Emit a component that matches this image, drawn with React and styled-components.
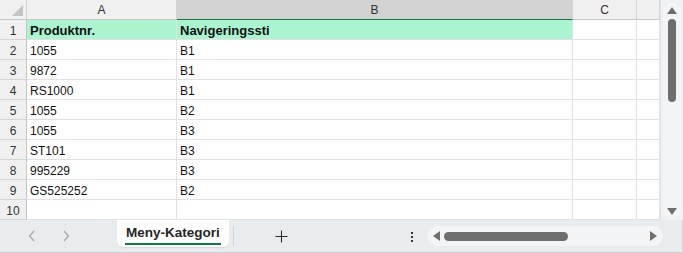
import React from 'react';
import styled, { createGlobalStyle } from 'styled-components';

const GlobalStyle = createGlobalStyle`
    html, body {
        margin: 0;
        padding: 0;
        background: #ffffff;
    }
    body {
        font-family: "Liberation Sans", Arial, sans-serif;
    }
`;

const columns = ['A', 'B', 'C', ''];

const rows = [
    ['Produktnr.', 'Navigeringssti'],
    ['1055', 'B1'],
    ['9872', 'B1'],
    ['RS1000', 'B1'],
    ['1055', 'B2'],
    ['1055', 'B3'],
    ['ST101', 'B3'],
    ['995229', 'B3'],
    ['GS525252', 'B2'],
    ['', ''],
];

const App = () => {
    return (
        <>
            <GlobalStyle />
            <Window>
                <Main>
                    <Sheet>
                        <Corner>
                            <CornerMark />
                        </Corner>
                        {columns.map((c, i) => (
                            <ColHead key={c + i} $selected={c === 'B'}>{c}</ColHead>
                        ))}
                        {rows.map((r, i) => (
                            <React.Fragment key={i}>
                                <RowHead>{i + 1}</RowHead>
                                <Cell $header={i === 0}>{r[0]}</Cell>
                                <Cell $header={i === 0}>{r[1]}</Cell>
                                <Cell />
                                <Cell />
                            </React.Fragment>
                        ))}
                    </Sheet>
                    <VScroll>
                        <VTrack>
                            <ArrowUp />
                            <VThumb />
                            <Spacer />
                            <ArrowDown />
                        </VTrack>
                    </VScroll>
                </Main>
                <TabBar>
                    <NavButtons>
                        <Chevron viewBox="0 0 8 12">
                            <path d="M6 1 L1.5 6 L6 11" />
                        </Chevron>
                        <Chevron viewBox="0 0 8 12">
                            <path d="M2 1 L6.5 6 L2 11" />
                        </Chevron>
                    </NavButtons>
                    <Tab>
                        <TabLabel>Meny-Kategori</TabLabel>
                    </Tab>
                    <Divider />
                    <AddButton>
                        <svg width="13" height="13" viewBox="0 0 13 13">
                            <path d="M6.5 0.5 V12.5 M0.5 6.5 H12.5" stroke="#2b2b2b" strokeWidth="1.1" />
                        </svg>
                    </AddButton>
                    <MoreButton>
                        <Dot />
                        <Dot />
                        <Dot />
                    </MoreButton>
                    <HScroll>
                        <ArrowLeft />
                        <HThumb />
                        <Spacer />
                        <ArrowRight />
                    </HScroll>
                </TabBar>
            </Window>
        </>
    );
};

export default App;

const Window = styled.div`
    width: 683px;
    height: 253px;
    display: flex;
    flex-direction: column;
    overflow: hidden;
    background: #ffffff;
`;

const Main = styled.div`
    display: flex;
    height: 220px;
`;

const Sheet = styled.div`
    flex: 1;
    display: grid;
    grid-template-columns: 27px 150px 396px 64px 23px;
    grid-template-rows: 20px;
    grid-auto-rows: 20px;
    overflow: hidden;
`;

const Corner = styled.div`
    position: relative;
    background: #f0f0f0;
    border-right: 1px solid #d4d4d4;
    border-bottom: 1px solid #c6c6c6;
`;

const CornerMark = styled.div`
    position: absolute;
    right: 3px;
    bottom: 3px;
    width: 0;
    height: 0;
    border-left: 11px solid transparent;
    border-bottom: 11px solid #c4c4c4;
`;

const ColHead = styled.div`
    display: flex;
    align-items: center;
    justify-content: center;
    padding-top: 1px;
    font-size: 12px;
    color: #333333;
    background: ${p => (p.$selected ? '#d2d2d2' : '#f0f0f0')};
    border-right: 1px solid #d4d4d4;
    border-bottom: 1px solid ${p => (p.$selected ? '#1e7145' : '#c6c6c6')};
    box-sizing: border-box;
`;

const RowHead = styled.div`
    display: flex;
    align-items: center;
    justify-content: center;
    padding-top: 2px;
    font-size: 12px;
    color: #333333;
    background: #f0f0f0;
    border-right: 1px solid #c6c6c6;
    border-bottom: 1px solid #d4d4d4;
    box-sizing: border-box;
`;

const Cell = styled.div`
    display: flex;
    align-items: center;
    padding: 2px 0 0 3px;
    font-size: ${p => (p.$header ? '13px' : '12px')};
    font-weight: ${p => (p.$header ? 700 : 400)};
    color: #111111;
    white-space: nowrap;
    background: ${p => (p.$header ? '#aaf4d0' : '#ffffff')};
    border-right: 1px solid #e1e1e1;
    border-bottom: 1px solid #e1e1e1;
    box-sizing: border-box;
`;

const VScroll = styled.div`
    width: 23px;
    background: #eef1f3;
    border-left: 1px solid #e2e5e7;
    box-sizing: border-box;
    padding: 3px 2px 0 2px;
    display: flex;
`;

const VTrack = styled.div`
    flex: 1;
    display: flex;
    flex-direction: column;
    align-items: center;
    background: #f3f4f5;
    border-radius: 9px;
    padding: 4px 0 5px;
`;

const Spacer = styled.div`
    flex: 1;
`;

const ArrowUp = styled.div`
    width: 0;
    height: 0;
    border-left: 5px solid transparent;
    border-right: 5px solid transparent;
    border-bottom: 7px solid #6f6f6f;
`;

const ArrowDown = styled.div`
    width: 0;
    height: 0;
    border-left: 5px solid transparent;
    border-right: 5px solid transparent;
    border-top: 7px solid #6f6f6f;
`;

const VThumb = styled.div`
    margin-top: 5px;
    width: 8px;
    height: 83px;
    border-radius: 4px;
    background: #6e6e6e;
`;

const TabBar = styled.div`
    height: 33px;
    box-sizing: border-box;
    display: flex;
    align-items: center;
    background: #e9ecee;
    border-bottom: 1px solid #c7cbce;
    border-right: 1px solid #d5d9dc;
`;

const NavButtons = styled.div`
    display: flex;
    align-items: center;
    gap: 26px;
    padding-left: 28px;
    width: 117px;
    flex-shrink: 0;
    box-sizing: border-box;
`;

const Chevron = styled.svg`
    width: 8px;
    height: 12px;
    fill: none;
    stroke: #a3a6a8;
    stroke-width: 1.2;
`;

const Tab = styled.div`
    align-self: flex-start;
    width: 112px;
    height: 27px;
    flex-shrink: 0;
    box-sizing: border-box;
    background: #ffffff;
    border-radius: 0 0 6px 6px;
    box-shadow: 0 1px 1px rgba(0, 0, 0, 0.08);
    display: flex;
    justify-content: center;
    padding-top: 5px;
`;

const TabLabel = styled.div`
    font-size: 13.5px;
    font-weight: 700;
    color: #262626;
    height: 18px;
    padding: 0 1px;
    border-bottom: 2px solid #107c41;
    line-height: 16px;
`;

const Divider = styled.div`
    width: 1px;
    height: 20px;
    margin-left: 4px;
    flex-shrink: 0;
    background: #cfd2d4;
`;

const AddButton = styled.div`
    display: flex;
    margin-left: 41px;
`;

const MoreButton = styled.div`
    display: flex;
    flex-direction: column;
    gap: 2px;
    margin-left: 123px;
    padding-top: 2px;
`;

const Dot = styled.div`
    width: 2px;
    height: 2px;
    background: #333333;
`;

const HScroll = styled.div`
    margin-left: 14px;
    width: 236px;
    height: 20px;
    flex-shrink: 0;
    border-radius: 10px;
    background: #f3f4f5;
    display: flex;
    align-items: center;
    padding: 0 6px;
    box-sizing: border-box;
`;

const ArrowLeft = styled.div`
    width: 0;
    height: 0;
    border-top: 5px solid transparent;
    border-bottom: 5px solid transparent;
    border-right: 7px solid #6f6f6f;
`;

const ArrowRight = styled.div`
    width: 0;
    height: 0;
    border-top: 5px solid transparent;
    border-bottom: 5px solid transparent;
    border-left: 7px solid #6f6f6f;
`;

const HThumb = styled.div`
    margin-left: 4px;
    width: 124px;
    height: 9px;
    border-radius: 5px;
    background: #6e6e6e;
`;
